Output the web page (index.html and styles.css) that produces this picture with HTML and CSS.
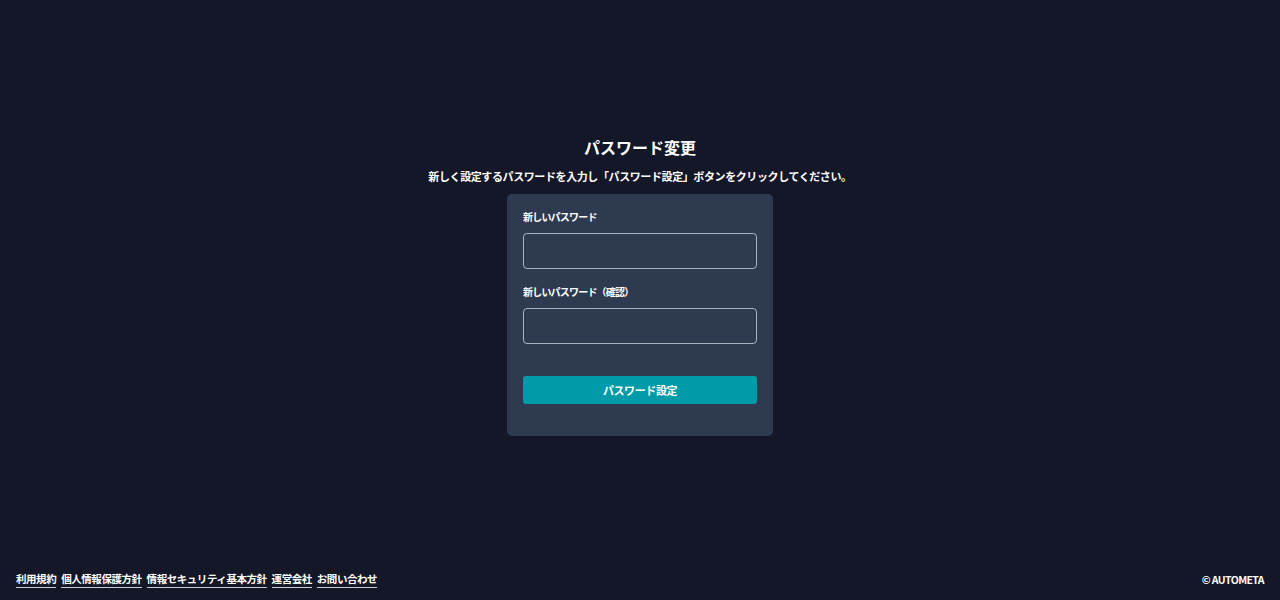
FILE: index.html
```html
<!DOCTYPE html>
<html lang="ja">
<head>
    <meta charset="UTF-8">
    <meta name="viewport" content="width=device-width, initial-scale=1.0">
    <title>パスワード変更</title>
    <link rel="stylesheet" href="styles.css">
</head>
<body>
    <div class="page">
        <main class="main">
            <h1 class="title">パスワード変更</h1>
            <p class="lead">新しく設定するパスワードを入力し「パスワード設定」ボタンをクリックしてください。</p>
            <form class="card">
                <label class="field">
                    <span class="label">新しいパスワード</span>
                    <input class="input" type="password">
                </label>
                <label class="field">
                    <span class="label">新しいパスワード（確認）</span>
                    <input class="input" type="password">
                </label>
                <button class="submit" type="button">パスワード設定</button>
            </form>
        </main>
        <footer class="footer">
            <nav class="links">
                <a href="#">利用規約</a>
                <a href="#">個人情報保護方針</a>
                <a href="#">情報セキュリティ基本方針</a>
                <a href="#">運営会社</a>
                <a href="#">お問い合わせ</a>
            </nav>
            <div class="copy">© AUTOMETA</div>
        </footer>
    </div>
</body>
</html>
```

FILE: styles.css
```css
body {
    margin: 0;
    background: #141727;
    color: #ffffff;
    font-family: "Noto Sans CJK JP", "Noto Sans", sans-serif;
}

.page {
    display: flex;
    flex-direction: column;
    height: 100vh;
}

.main {
    flex: 1;
    display: flex;
    flex-direction: column;
    align-items: center;
    padding-top: 134px;
}

.title {
    margin: 0;
    font-size: 16px;
    font-weight: bold;
    line-height: 26px;
}

.lead {
    margin: 7px 0 9px;
    font-size: 11px;
    font-weight: bold;
    line-height: 18px;
    letter-spacing: -0.4px;
}

.card {
    width: 234px;
    padding: 16px 16px 32px;
    background: #2e3a50;
    border-radius: 5px;
    display: flex;
    flex-direction: column;
}

.field {
    display: flex;
    flex-direction: column;
    margin-bottom: 16px;
}

.label {
    font-size: 10px;
    font-weight: bold;
    line-height: 14px;
    letter-spacing: -0.8px;
    margin-bottom: 9px;
}

.input {
    box-sizing: border-box;
    height: 36px;
    margin: 0;
    border: 1px solid #aab2c0;
    border-radius: 4px;
    background: #2e3a50;
    color: #ffffff;
}

.submit {
    margin-top: 16px;
    height: 28px;
    border: none;
    border-radius: 3px;
    background: #009aa8;
    color: #ffffff;
    font-family: inherit;
    font-size: 11px;
    font-weight: bold;
    letter-spacing: -0.4px;
}

.footer {
    display: flex;
    justify-content: space-between;
    align-items: center;
    padding: 0 16px 12px;
    font-size: 10.5px;
    font-weight: bold;
}

.links {
    display: flex;
    gap: 5px;
    letter-spacing: -0.45px;
}

.links a {
    color: #ffffff;
    text-decoration: none;
    border-bottom: 1px solid #c8ccd6;
    line-height: 16px;
}

.copy {
    letter-spacing: -0.6px;
}
```
